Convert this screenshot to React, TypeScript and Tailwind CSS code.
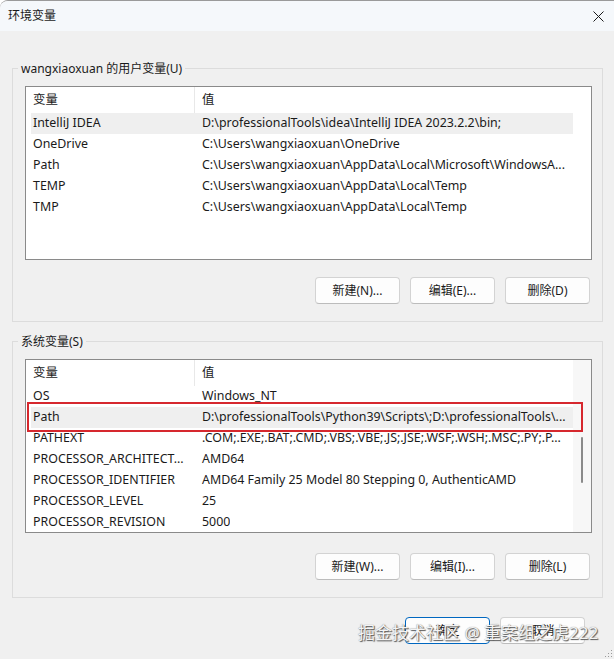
import React from 'react';

const userVars = [
  ['IntelliJ IDEA', 'D:\\professionalTools\\idea\\IntelliJ IDEA 2023.2.2\\bin;'],
  ['OneDrive', 'C:\\Users\\wangxiaoxuan\\OneDrive'],
  ['Path', 'C:\\Users\\wangxiaoxuan\\AppData\\Local\\Microsoft\\WindowsA...'],
  ['TEMP', 'C:\\Users\\wangxiaoxuan\\AppData\\Local\\Temp'],
  ['TMP', 'C:\\Users\\wangxiaoxuan\\AppData\\Local\\Temp'],
];

const sysVars = [
  ['OS', 'Windows_NT'],
  ['Path', 'D:\\professionalTools\\Python39\\Scripts\\;D:\\professionalTools\\...'],
  ['PATHEXT', '.COM;.EXE;.BAT;.CMD;.VBS;.VBE;.JS;.JSE;.WSF;.WSH;.MSC;.PY;.P...'],
  ['PROCESSOR_ARCHITECT...', 'AMD64'],
  ['PROCESSOR_IDENTIFIER', 'AMD64 Family 25 Model 80 Stepping 0, AuthenticAMD'],
  ['PROCESSOR_LEVEL', '25'],
  ['PROCESSOR_REVISION', '5000'],
];

function Btn({ label, focused }: { label: string; focused?: boolean }) {
  return (
    <button
      className={`w-[85px] h-[27px] rounded-[4px] bg-[#fdfdfd] flex items-center justify-center ${
        focused ? 'border border-[#0067c0]' : 'border border-[#d3d3d3] border-b-[#bcbcbc]'
      }`}
    >
      {label}
    </button>
  );
}

function VarList({ rows, highlight, scroll }: { rows: string[][]; highlight: number; scroll?: boolean }) {
  return (
    <div className="relative h-[174px] border border-[#8a8a8a] bg-white flex text-[12.4px]">
      <div className="flex-1 pl-[5px] min-w-0">
        {/* header */}
        <div className="h-[26px] flex items-center">
          <div className="w-[163px] pl-[2px]">变量</div>
          <div className="w-px h-[26px] bg-[#e8e8e8]" />
          <div className="pl-[7px]">值</div>
        </div>
        {rows.map(([name, value], i) => (
          <div key={i} className={`h-[21px] flex items-center whitespace-nowrap ${i === highlight ? 'bg-[#efefef]' : ''}`}>
            <div className="w-[163px] pl-[2px] overflow-hidden">{name}</div>
            <div className="w-px" />
            <div className="pl-[7px] overflow-hidden">{value}</div>
          </div>
        ))}
      </div>
      <div className={`w-[18px] relative ${scroll ? 'bg-[#f7f7f7]' : ''}`}>
        {scroll && <div className="absolute left-[8px] top-[77px] w-[2px] h-[46px] rounded-full bg-[#8a8a8a]" />}
      </div>
      {scroll && (
        <div className="absolute left-[1px] top-[42px] w-[556px] h-[30px] border-2 border-[#d6282e]" />
      )}
    </div>
  );
}

export default function App() {
  return (
    <div
      className="w-[614px] h-[659px] bg-[#f0f0f0] relative overflow-hidden text-[12px] text-[#1a1a1a] rounded-tl-[8px] border-t border-[#9a9a9a]"
      style={{ fontFamily: '"Segoe UI", "Noto Sans", "Noto Sans CJK SC", sans-serif' }}
    >
      {/* title bar */}
      <div className="h-[30px] flex items-center justify-between pl-[8px] pr-[8px] bg-[#f5f8fb]">
        <span className="text-[12px]">环境变量</span>
        <svg width="11" height="11" viewBox="0 0 11 11" className="mr-[2px]">
          <path d="M0.5 0.5L10.5 10.5M10.5 0.5L0.5 10.5" stroke="#1a1a1a" strokeWidth="1" />
        </svg>
      </div>

      <div className="pl-[12px] pr-[11px] pt-[29px]">
        <fieldset className="border border-[#dcdcdc] px-0 pb-[17px]">
          <legend className="ml-[5px] px-[3px] leading-[17px]">wangxiaoxuan 的用户变量(U)</legend>
          <div className="pl-[12px] pr-[10px] pt-[9px]">
            <VarList rows={userVars} highlight={0} />
            <div className="flex justify-end gap-[10px] mt-[17px] pr-[2px]">
              <Btn label="新建(N)..." />
              <Btn label="编辑(E)..." />
              <Btn label="删除(D)" />
            </div>
          </div>
        </fieldset>

        <fieldset className="border border-[#dcdcdc] px-0 pb-[17px] mt-[11px]">
          <legend className="ml-[5px] px-[3px] leading-[17px]">系统变量(S)</legend>
          <div className="pl-[12px] pr-[10px] pt-[9px]">
            <VarList rows={sysVars} highlight={1} scroll />
            <div className="flex justify-end gap-[10px] mt-[20px] pr-[2px]">
              <Btn label="新建(W)..." />
              <Btn label="编辑(I)..." />
              <Btn label="删除(L)" />
            </div>
          </div>
        </fieldset>

        <div className="flex justify-end gap-[10px] mt-[19px] pr-[18px]">
          <Btn label="确定" focused />
          <Btn label="取消" />
        </div>
      </div>

      {/* watermark */}
      <div className="absolute left-[358px] top-[620px] text-[17px] leading-[24px] text-[#f4f4f4] whitespace-nowrap [text-shadow:1px_1px_1px_#555,0_0_1px_#777]">
        掘金技术社区 @ 重案组之虎222
      </div>

      {/* resize grip */}
      <svg width="10" height="10" viewBox="0 0 10 10" className="absolute right-[1px] bottom-[1px]">
        <rect x="8" y="2" width="1" height="1" fill="#9a9a9a" />
        <rect x="5" y="5" width="1" height="1" fill="#9a9a9a" />
        <rect x="8" y="5" width="1" height="1" fill="#9a9a9a" />
        <rect x="2" y="8" width="1" height="1" fill="#9a9a9a" />
        <rect x="5" y="8" width="1" height="1" fill="#9a9a9a" />
        <rect x="8" y="8" width="1" height="1" fill="#9a9a9a" />
      </svg>
    </div>
  );
}
